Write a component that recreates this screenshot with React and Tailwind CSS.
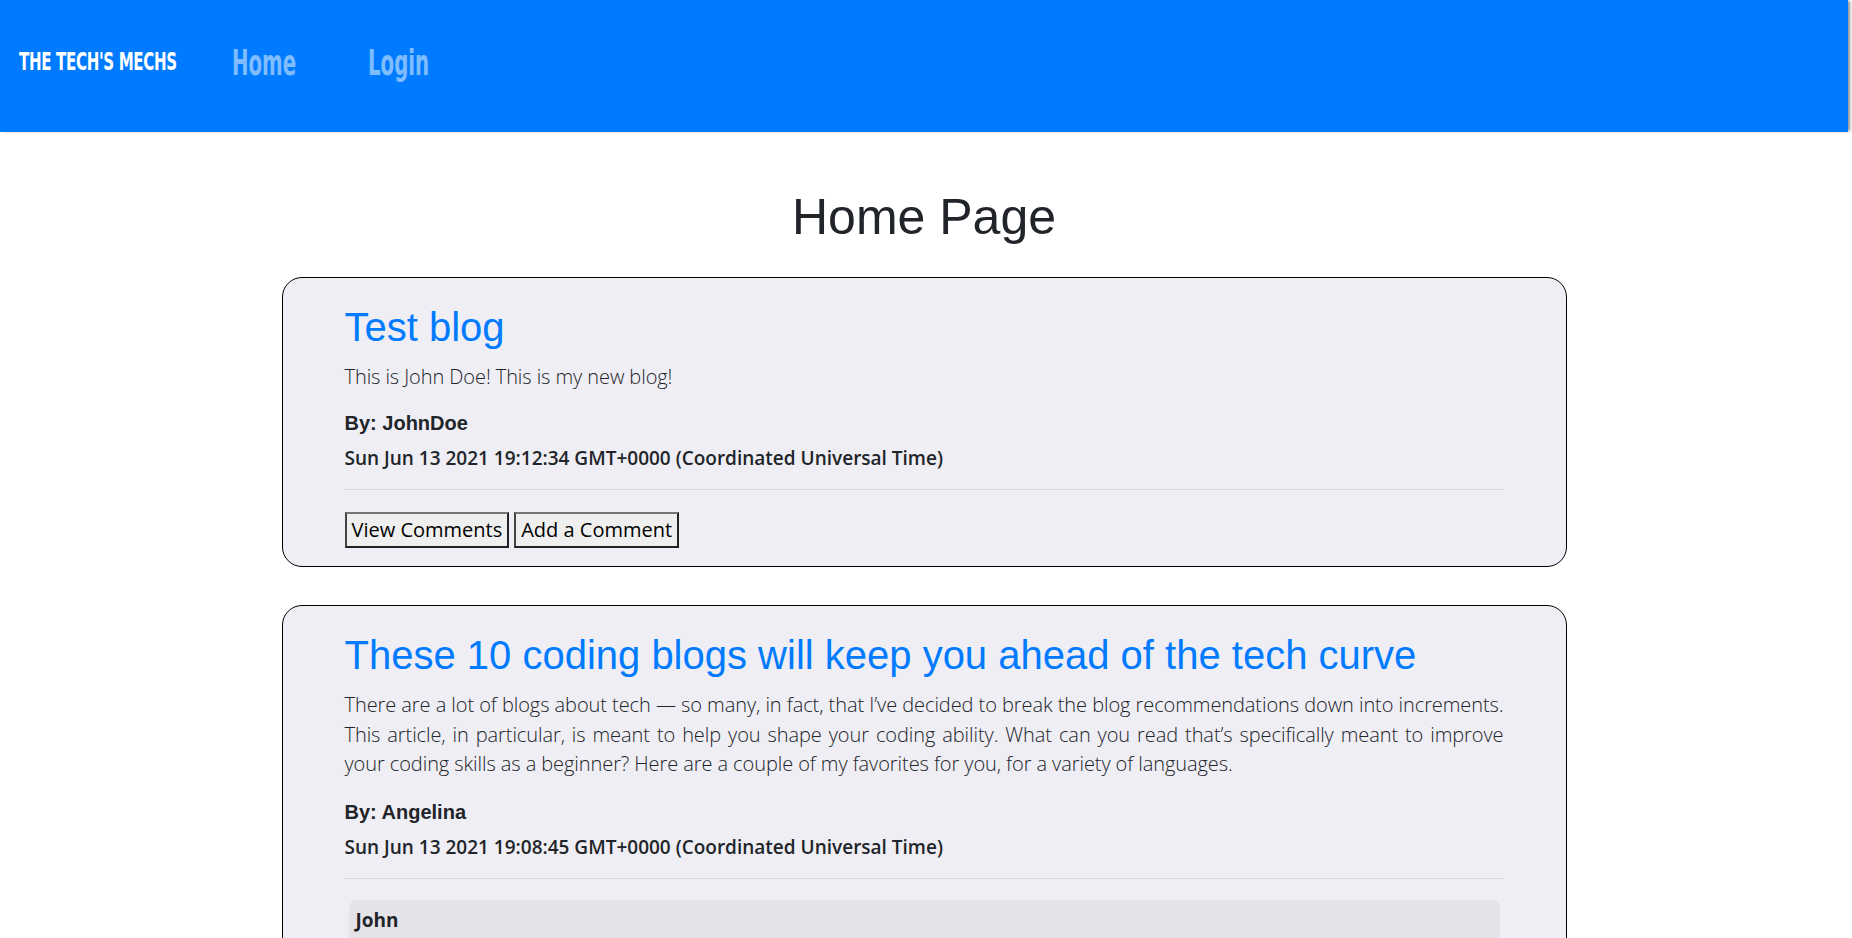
import React from "react";

const sans = "font-['Open_Sans','Noto_Sans',sans-serif]";
const arial = "font-['Liberation_Sans',Arial,sans-serif]";

function Card({ title, body, author, date, bodyGap, children }) {
  return (
    <div className="w-[1285px] rounded-[20px] border border-black bg-[#efeef4] px-[62px] pt-[25px] pb-[18px]">
      <h2 className={`${arial} text-[40px] leading-[48px] text-[#007bff] mb-[11px]`}>{title}</h2>
      <p className={`${sans} text-[20px] leading-[29.5px] font-light tracking-[-0.08px] text-justify text-[#212529] ${bodyGap}`}>{body}</p>
      <p className={`${arial} text-[20px] leading-[24px] font-bold text-[#212529] mb-[9px]`}>By: {author}</p>
      <p className={`${sans} text-[19px] leading-[28.5px] font-semibold text-[#212529]`}>{date}</p>
      <div className="mt-[17px] h-px bg-[#d6d5da]" />
      {children}
    </div>
  );
}

function Btn({ children }) {
  return (
    <button className={`${sans} h-[36px] px-[5px] text-[20px] leading-none text-black bg-[#efefef] border-2 border-t-[#767676] border-l-[#444] border-r-[#222] border-b-[#222]`}>
      {children}
    </button>
  );
}

export default function App() {
  return (
    <div className="w-[1848px] min-h-screen bg-white">
      <header className="h-[132px] bg-[#007bff] flex items-center pl-[19px] pb-[7px] shadow-[3px_0_3px_-1px_rgba(0,0,0,0.45)]">
        <div className="w-[213px] whitespace-nowrap">
          <span className="inline-block origin-left scale-x-[0.67] font-['DejaVu_Sans_Condensed','DejaVu_Sans',sans-serif] font-bold text-[25px] leading-none text-white tracking-[-0.5px]">
            THE TECH'S MECHS
          </span>
        </div>
        <div className="w-[136px] whitespace-nowrap">
          <a className="inline-block origin-left scale-x-[0.61] font-['DejaVu_Sans_Condensed','DejaVu_Sans',sans-serif] font-bold text-[36px] leading-none text-white/50">
            Home
          </a>
        </div>
        <div className="whitespace-nowrap">
          <a className="inline-block origin-left scale-x-[0.61] font-['DejaVu_Sans_Condensed','DejaVu_Sans',sans-serif] font-bold text-[36px] leading-none text-white/50">
            Login
          </a>
        </div>
      </header>

      <main className="flex flex-col items-center">
        <h1 className={`${arial} mt-[55px] text-[50px] leading-[60px] text-[#212529]`}>Home Page</h1>
        <div className="mt-[30px] flex flex-col gap-[38px] pb-10">
          <Card
            title="Test blog"
            body="This is John Doe! This is my new blog!"
            author="JohnDoe"
            date="Sun Jun 13 2021 19:12:34 GMT+0000 (Coordinated Universal Time)"
            bodyGap="mb-[19px]"
          >
            <div className="mt-[22px] flex gap-[5px]">
              <Btn>View Comments</Btn>
              <Btn>Add a Comment</Btn>
            </div>
          </Card>
          <Card
            title="These 10 coding blogs will keep you ahead of the tech curve"
            body="There are a lot of blogs about tech — so many, in fact, that I’ve decided to break the blog recommendations down into increments. This article, in particular, is meant to help you shape your coding ability. What can you read that’s specifically meant to improve your coding skills as a beginner? Here are a couple of my favorites for you, for a variety of languages."
            author="Angelina"
            date="Sun Jun 13 2021 19:08:45 GMT+0000 (Coordinated Universal Time)"
            bodyGap="mb-[21px]"
          >
            <div className="mt-[21px] mx-[4px] rounded-[8px] bg-[#e4e3e8] px-[7px] pt-[6px] pb-[10px]">
              <p className={`${sans} text-[19px] leading-[28px] font-bold text-[#212529]`}>John</p>
              <p className={`${sans} text-[18px] leading-[27px] text-[#212529]`}>Great list, thanks for sharing!</p>
            </div>
          </Card>
        </div>
      </main>
    </div>
  );
}
